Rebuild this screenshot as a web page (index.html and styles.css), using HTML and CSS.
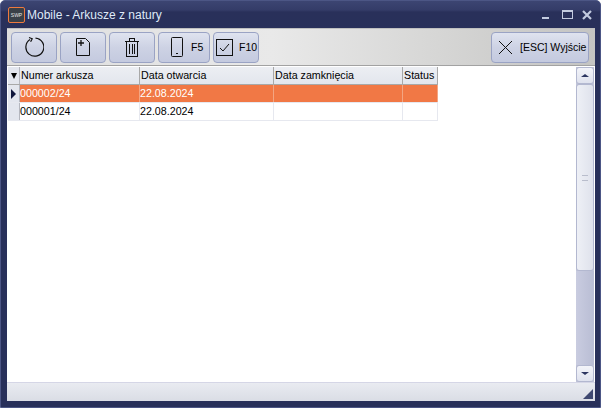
FILE: index.html
```html
<!DOCTYPE html>
<html lang="en">
<head>
    <meta charset="UTF-8">
    <title>Mobile - Arkusze z natury</title>
    <link rel="stylesheet" href="styles.css">
</head>
<body>
    <div class="window">
        <div class="title-bar">
            <div class="app-logo"><span>SWP</span></div>
            <div class="title-text">Mobile - Arkusze z natury</div>
            <div class="window-controls">
                <svg class="ctl-min" width="10" height="10" viewBox="0 0 10 10"><rect x="1" y="7" width="7" height="2" fill="#c3cbe0"/></svg>
                <svg class="ctl-max" width="12" height="10" viewBox="0 0 12 10"><rect x="0.5" y="0.5" width="10" height="8" fill="none" stroke="#c3cbe0"/><rect x="0" y="0" width="11" height="2" fill="#c3cbe0"/></svg>
                <svg class="ctl-close" width="11" height="10" viewBox="0 0 11 10"><path d="M1 1l8 8M9 1l-8 8" stroke="#c3cbe0" stroke-width="2.2" fill="none"/></svg>
            </div>
        </div>
        <div class="client">
            <div class="toolbar">
                <button class="tool-btn btn-wide">
                    <svg width="20" height="22" viewBox="0 0 20 22"><path d="M6 3.6a9 9 0 1 0 5.5-1.4" fill="none" stroke="#111" stroke-width="1.2"/><path d="M5 1.5l3.2 1.2-1.6 3" fill="none" stroke="#111" stroke-width="1.2"/></svg>
                </button>
                <button class="tool-btn btn-wide">
                    <svg width="16" height="20" viewBox="0 0 16 20"><path d="M1.5 1.5h9l4 4v13h-13z" fill="none" stroke="#111"/><path d="M6 3v6M3 6h6" stroke="#111" stroke-width="1.3"/></svg>
                </button>
                <button class="tool-btn btn-wide">
                    <svg width="14" height="20" viewBox="0 0 14 20" shape-rendering="crispEdges"><path d="M0 4.5h14M4.5 4V1.5h5V4M1.5 5v14.5h11V5" fill="none" stroke="#111"/><path d="M4.5 7v10M7 7v10M9.5 7v10" stroke="#111"/></svg>
                </button>
                <button class="tool-btn btn-f5">
                    <svg width="12" height="20" viewBox="0 0 12 20"><rect x="0.5" y="0.5" width="11" height="19" rx="1" fill="none" stroke="#111"/><rect x="5" y="16" width="2" height="1" fill="#111"/></svg>
                    <span>F5</span>
                </button>
                <button class="tool-btn btn-f10">
                    <svg width="17" height="17" viewBox="0 0 17 17"><rect x="0.5" y="0.5" width="16" height="16" fill="none" stroke="#111"/><path d="M4 9l3 3 6-7" fill="none" stroke="#111"/></svg>
                    <span>F10</span>
                </button>
                <button class="tool-btn btn-exit">
                    <svg width="15" height="15" viewBox="0 0 15 15"><path d="M1 1l13 13M14 1L1 14" stroke="#111" fill="none"/></svg>
                    <span>[ESC] Wyjście</span>
                </button>
            </div>
            <div class="grid-area">
                <div class="grid">
                    <div class="row head-row">
                        <div class="row-head corner"><i class="arrow-down"></i></div>
                        <div class="cell col-num">Numer arkusza</div>
                        <div class="cell col-open">Data otwarcia</div>
                        <div class="cell col-close">Data zamknięcia</div>
                        <div class="cell col-status">Status</div>
                    </div>
                    <div class="row selected">
                        <div class="row-head"><i class="arrow-right"></i></div>
                        <div class="cell col-num">000002/24</div>
                        <div class="cell col-open">22.08.2024</div>
                        <div class="cell col-close"></div>
                        <div class="cell col-status"></div>
                    </div>
                    <div class="row">
                        <div class="row-head"></div>
                        <div class="cell col-num">000001/24</div>
                        <div class="cell col-open">22.08.2024</div>
                        <div class="cell col-close"></div>
                        <div class="cell col-status"></div>
                    </div>
                </div>
                <div class="scrollbar">
                    <div class="scroll-btn"><i class="tri-up"></i></div>
                    <div class="scroll-thumb"><i class="grip"></i></div>
                    <div class="scroll-track"></div>
                    <div class="scroll-btn"><i class="tri-down"></i></div>
                </div>
            </div>
            <div class="status-bar">
                <i class="size-grip"></i>
            </div>
        </div>
    </div>
</body>
</html>
```

FILE: styles.css
```css
html, body {
    margin: 0;
    padding: 0;
}
body {
    width: 601px;
    height: 408px;
    overflow: hidden;
    background-color: #ffffff;
    font-family: "Liberation Sans", Arial, sans-serif;
    font-size: 10.7px;
    color: #000000;
}
.window {
    box-sizing: border-box;
    width: 601px;
    height: 408px;
    display: flex;
    flex-direction: column;
    border: 1px solid #4c5685;
    border-radius: 5px 5px 0 0;
    background: linear-gradient(to bottom, #3c4572 0, #343c68 9px, #29305a 11px, #28305a 28px);
    background-color: #28305a;
}
.title-bar {
    height: 27px;
    flex: none;
    display: flex;
    align-items: center;
    padding: 0 7px 0 7px;
}
.app-logo {
    box-sizing: border-box;
    width: 17px;
    height: 16px;
    border: 1px solid #ee7a3e;
    border-radius: 2px;
    background-color: #3a4048;
    display: flex;
    align-items: center;
    justify-content: center;
}
.app-logo span {
    font-size: 5px;
    color: #e6e6e6;
}
.title-text {
    margin-left: 2px;
    font-family: "Liberation Sans", Arial, sans-serif;
    font-size: 12px;
    color: #dfeaf8;
    flex: 1;
}
.window-controls {
    display: flex;
    align-items: center;
    gap: 8px;
}
.ctl-min {
    margin-right: 3px;
}
.client {
    flex: 1;
    margin: 0 5px 6px 6px;
    display: flex;
    flex-direction: column;
    background-color: #ffffff;
    min-height: 0;
}
.toolbar {
    height: 38px;
    flex: none;
    box-sizing: border-box;
    display: flex;
    align-items: center;
    gap: 3px;
    padding: 0 6px 0 4px;
    background: linear-gradient(to right, #dedede, #e9e9e9 45%, #c4c4c2);
    border-top: 1px solid #bfc0c0;
    border-bottom: 1px solid #a2a2a2;
}
.tool-btn {
    box-sizing: border-box;
    height: 31px;
    padding: 0;
    display: flex;
    align-items: center;
    justify-content: center;
    overflow: hidden;
    border: 1px solid #9aa3c4;
    border-radius: 4px;
    background: linear-gradient(to bottom, #dfe3ef, #cdd2e4 50%, #c4cadf);
    font-family: "Liberation Sans", Arial, sans-serif;
    font-size: 10.5px;
    color: #000000;
}
.tool-btn svg,
.tool-btn span {
    flex: none;
}
.btn-wide {
    width: 46px;
}
.btn-f5 {
    width: 52px;
    gap: 8px;
    padding-left: 12px;
    justify-content: flex-start;
}
.btn-f10 {
    width: 46px;
    gap: 6px;
    padding-left: 2px;
    justify-content: flex-start;
    margin-right: auto;
}
.btn-exit {
    width: 98px;
    gap: 7px;
    padding-left: 6px;
    justify-content: flex-start;
    white-space: nowrap;
}
.grid-area {
    flex: 1;
    min-height: 0;
    display: flex;
    justify-content: space-between;
    padding: 1px 0 0 1px;
}
.grid {
    width: 430px;
}
.row {
    display: flex;
    height: 18px;
    border-bottom: 1px solid #e6e8ef;
    box-sizing: border-box;
}
.head-row {
    background: linear-gradient(to bottom, #eceef3, #e3e6ed);
    border-bottom: 1px solid #a8a8a8;
}
.row-head {
    box-sizing: border-box;
    width: 12px;
    flex: none;
    display: flex;
    align-items: center;
    justify-content: center;
    background-color: #e3e6ee;
    border-right: 1px solid #b4b6be;
}
.cell {
    box-sizing: border-box;
    padding: 0;
    line-height: 17px;
    white-space: nowrap;
    overflow: hidden;
    border-right: 1px solid #e6e8ef;
}
.head-row .cell {
    padding-left: 1px;
    border-right: 1px solid #a8a8a8;
}
.col-num {
    width: 120px;
}
.col-open {
    width: 134px;
}
.col-close {
    width: 129px;
}
.col-status {
    width: 35px;
}
.selected .cell {
    background-color: #f17845;
    color: #ffffff;
    border-right-color: #f3a582;
}
.arrow-down {
    width: 0;
    height: 0;
    border-left: 3px solid transparent;
    border-right: 3px solid transparent;
    border-top: 6px solid #000000;
}
.arrow-right {
    width: 0;
    height: 0;
    border-top: 5px solid transparent;
    border-bottom: 5px solid transparent;
    border-left: 5px solid #10163c;
}
.scrollbar {
    width: 18px;
    flex: none;
    display: flex;
    flex-direction: column;
    margin-right: 1px;
    background-color: #c0c4d8;
}
.scroll-btn {
    box-sizing: border-box;
    height: 17px;
    flex: none;
    display: flex;
    align-items: center;
    justify-content: center;
    border: 1px solid #b3b8d0;
    border-radius: 3px;
    background: linear-gradient(to bottom, #f3f4f9, #dfe2ee);
}
.scroll-thumb {
    box-sizing: border-box;
    height: 187px;
    flex: none;
    display: flex;
    align-items: center;
    justify-content: center;
    border: 1px solid #b3b8d0;
    border-radius: 3px;
    background: linear-gradient(to right, #eef0f6, #dfe2ec);
}
.scroll-track {
    flex: 1;
    background: linear-gradient(to right, #c9cce0, #b9bdd4);
}
.grip {
    width: 6px;
    height: 4px;
    border-top: 1px solid #b9bdcc;
    border-bottom: 1px solid #b9bdcc;
}
.tri-up {
    width: 0;
    height: 0;
    border-left: 4px solid transparent;
    border-right: 4px solid transparent;
    border-bottom: 3px solid #2c3560;
}
.tri-down {
    width: 0;
    height: 0;
    border-left: 4px solid transparent;
    border-right: 4px solid transparent;
    border-top: 3px solid #2c3560;
}
.status-bar {
    height: 19px;
    flex: none;
    box-sizing: border-box;
    display: flex;
    justify-content: flex-end;
    align-items: flex-end;
    padding: 0 2px 2px 0;
    border-top: 1px solid #d5d6e6;
    background: linear-gradient(to bottom, #e9ebf1, #dadde5);
}
.size-grip {
    width: 0;
    height: 0;
    border-left: 10px solid transparent;
    border-bottom: 10px solid #3f4870;
}
```
